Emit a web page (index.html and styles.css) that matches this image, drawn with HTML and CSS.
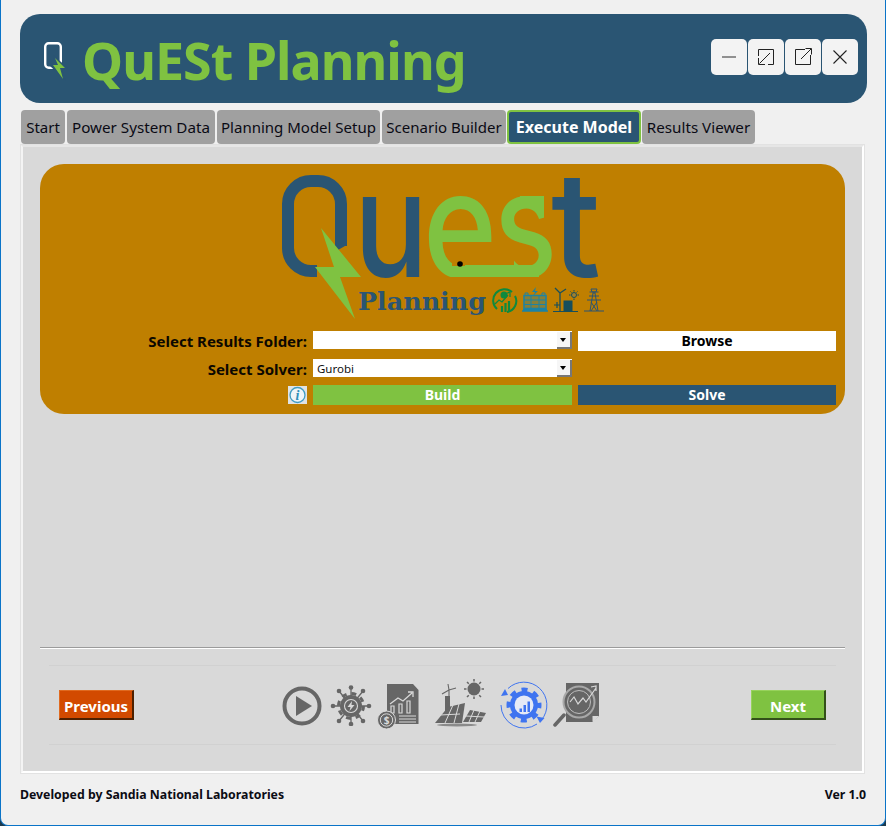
FILE: index.html
```html
<!DOCTYPE html>
<html lang="en">
<head>
<meta charset="utf-8">
<title>QuESt Planning</title>
<link rel="stylesheet" href="styles.css">
</head>
<body>
<div class="window">
  <header class="banner">
    <svg class="banner-logo" viewBox="42 40 26 41" aria-hidden="true">
      <rect x="45.200" y="43.200" width="15.600" height="24.600" rx="3.500" fill="none" stroke="#fff" stroke-width="2.400"/>
      <polygon points="53,55 68,68 62,70 66,81 50,66 54,62" fill="#2a5573"/>
      <polygon points="55,58 65,68 60,68 63,79 53,65 58,65" fill="#7fc241"/>
    </svg>
    <h1 class="banner-title">QuESt Planning</h1>
    <div class="win-buttons">
      <button class="win-btn" aria-label="Minimize"><svg viewBox="0 0 36 36"><path d="M11 18h14" stroke="#777" stroke-width="1.600"/></svg></button>
      <button class="win-btn" aria-label="Shrink"><svg viewBox="0 0 36 36" fill="none" stroke="#222" stroke-width="1"><path d="M10.500 17V10.500H25.500V25.500H20"/><path d="M22 14L11.500 24.500M10.500 19V25.500H17"/></svg></button>
      <button class="win-btn" aria-label="Expand"><svg viewBox="0 0 36 36" fill="none" stroke="#222" stroke-width="1"><path d="M20 10.500H10.500V25.500H25.500V16"/><path d="M16 20L26 10M20.500 9.500H26.500V15.500"/></svg></button>
      <button class="win-btn" aria-label="Close"><svg viewBox="0 0 36 36" fill="none" stroke="#222" stroke-width="1.100"><path d="M11.500 11.500L24.500 24.500M24.500 11.500L11.500 24.500"/></svg></button>
    </div>
  </header>

  <nav class="tabs">
    <div class="tab tab-start">Start</div>
    <div class="tab tab-power">Power System Data</div>
    <div class="tab tab-model">Planning Model Setup</div>
    <div class="tab tab-scenario">Scenario Builder</div>
    <div class="tab tab-active">Execute Model</div>
    <div class="tab tab-results">Results Viewer</div>
  </nav>

  <main class="panel">
    <section class="card">
      <svg class="card-logo" viewBox="270 168 345 157" role="img" aria-label="Quest Planning logo">
        <rect x="288" y="181" width="53" height="90" rx="23" fill="none" stroke="#2a5573" stroke-width="12"/>
        <polygon points="317,262 345,246 356,246 356,284 317,284" fill="#bf7f00"/>
        <text class="lg"><tspan class="lg-blue" x="354" y="277" textLength="74" lengthAdjust="spacingAndGlyphs">u</tspan><tspan class="lg-green" x="423" y="277" textLength="74" lengthAdjust="spacingAndGlyphs">e</tspan><tspan class="lg-green" x="494" y="277" textLength="63" lengthAdjust="spacingAndGlyphs">s</tspan><tspan class="lg-blue" x="551" y="277" textLength="50" lengthAdjust="spacingAndGlyphs">t</tspan></text>
        <rect x="452" y="246" width="62" height="20" fill="#bf7f00"/>
        <rect x="544" y="190" width="8" height="36" fill="#bf7f00"/>
        <rect x="425" y="277" width="130" height="6" fill="#bf7f00"/>
        <rect x="465" y="265" width="74" height="12" fill="#7fc241"/>
        <rect x="520" y="196" width="24" height="12" fill="#7fc241"/>
        <polygon points="321,228 361,277 340,277 355,319 315,267 334,267" fill="#7fc241"/>
        <circle cx="460" cy="264" r="2.800" fill="#000"/>
        <text class="lg-sub" x="358" y="310" textLength="128" lengthAdjust="spacingAndGlyphs">Planning</text>
        <g fill="none" stroke="#0e8a3e" stroke-width="2">
          <path d="M497 309a11 11 0 1 1 15-17"/>
          <path d="M515 296a11 11 0 0 1-8 16"/>
          <circle cx="504" cy="295" r="3.500" fill="#0e8a3e" stroke="none"/>
          <path d="M495 304l4-4 3 2 6-7M505 294l5-2v5" stroke-width="1.300"/>
          <path d="M502 312v-6M505.500 312v-9M509 312v-11" stroke-width="2.200"/>
        </g>
        <g fill="none" stroke="#1b83a5">
          <path d="M522 311h26M523 309.500h24" stroke-width="1.600"/>
          <rect x="524" y="295.500" width="22" height="13" fill="#1b83a5" fill-opacity=".35" stroke-width="1.500"/>
          <path d="M531 295v14M539 295v14M524 300h22M524 304.500h22" stroke-width="1"/>
          <path d="M525 295v-2h3v2M542 295v-2h3v2" stroke-width="1"/>
          <polygon points="536,287 532,292 535,292 533,296 538,291 535,291" fill="#1b83a5" stroke="none"/>
        </g>
        <g fill="none" stroke="#174f5c" stroke-width="1">
          <path d="M553 311.500h25"/>
          <path d="M560 311v-18M560 293l-5-5M560 293l6-4M560 293v7" stroke-width="1.300"/>
          <path d="M554 305h6M557 302v6" stroke-width="1.200"/>
          <rect x="564" y="301" width="8" height="10" fill="#174f5c"/>
          <circle cx="574" cy="295" r="2.500" fill="#a08030"/>
          <path d="M574 290v1.500M574 298.500v1.500M569 295h1.500M577.500 295h1.500M570.500 291.500l1 1M577.500 291.500l-1 1"/>
        </g>
        <g fill="none" stroke="#2a5573" stroke-width="1">
          <path d="M584 311h20M590 311l3-18h2l3 18M589 296h10M587 300h14M591 302l6 9M597 302l-6 9M589.500 292h9"/>
          <path d="M591 289h6l-1 3h-4z"/>
        </g>
      </svg>

      <div class="form">
        <label class="form-label">Select Results Folder:</label>
        <div class="combo"><span class="combo-value"></span><span class="combo-arrow"></span></div>
        <button class="btn-browse">Browse</button>

        <label class="form-label">Select Solver:</label>
        <div class="combo"><span class="combo-value">Gurobi</span><span class="combo-arrow"></span></div>
        <span></span>

        <div class="info-cell">
          <svg class="info" viewBox="0 0 19 18" aria-label="Information">
            <rect width="19" height="18" fill="#dfe3e5"/>
            <circle cx="9.500" cy="9" r="7.500" fill="#eef5f8" stroke="#3f9cc2" stroke-width="1.300"/>
            <text class="info-i" x="9.500" y="13.500">i</text>
          </svg>
        </div>
        <button class="btn-build">Build</button>
        <button class="btn-solve">Solve</button>
      </div>
    </section>

    <div class="spacer"></div>
    <div class="divider"></div>

    <div class="nav-area">
      <button class="step-btn step-prev">Previous</button>
      <div class="steps">
        <svg class="icon-play" viewBox="283 687 40 40" aria-label="Start">
          <circle cx="303" cy="707" r="17.500" fill="none" stroke="#666" stroke-width="4"/>
          <polygon points="297,697 297,717 313,707" fill="#666"/>
        </svg>
        <svg class="icon-gear" viewBox="331 684 42 42" aria-label="Power system data">
          <g stroke="#666" stroke-width="1.300">
            <path d="M352 688v36M334 706h36M340 691l24 30M364 691l-24 30"/>
          </g>
          <g fill="#666">
            <circle cx="352" cy="687.500" r="2.300"/><circle cx="352" cy="724" r="2.300"/>
            <circle cx="334" cy="706" r="2.300"/><circle cx="370" cy="706" r="2.300"/>
            <circle cx="340" cy="691" r="2.300"/><circle cx="364" cy="691" r="2.300"/>
            <circle cx="340" cy="721" r="2.300"/><circle cx="364" cy="721" r="2.300"/>
          </g>
          <circle cx="352" cy="706" r="12.500" fill="none" stroke="#666" stroke-width="3" stroke-dasharray="4.900 4.920"/>
          <circle cx="352" cy="706" r="11" fill="#666"/>
          <circle cx="352" cy="706" r="6.500" fill="none" stroke="#d9d9d9" stroke-width="1.100"/>
          <polygon points="353,701 348.500,707 351.500,707 350.500,711 355.500,705 352.500,705" fill="#d9d9d9"/>
        </svg>
        <svg class="icon-report" viewBox="377 683 44 47" aria-label="Planning model setup">
          <polygon points="388,684 414,684 419.500,690 419.500,724 388,724" fill="#666"/>
          <path d="M391 704l8-6 5 3 9-8M409 692l5 0v5" fill="none" stroke="#d9d9d9" stroke-width="1.300"/>
          <path d="M392 713v-7h3v7zM400 713v-9h3v9zM408 713v-12h3v12z" fill="none" stroke="#d9d9d9" stroke-width="1.200"/>
          <path d="M400 716h17M400 719h17M400 722h17" stroke="#d9d9d9" stroke-width="1"/>
          <circle cx="387.500" cy="720" r="9" fill="#666" stroke="#d9d9d9" stroke-width="1"/>
          <circle cx="387.500" cy="720" r="6.200" fill="none" stroke="#d9d9d9" stroke-width="1"/>
          <text class="dollar" x="387.500" y="723.500">$</text>
        </svg>
        <svg class="icon-solar" viewBox="435 677 56 51" aria-label="Scenario builder">
          <circle cx="475" cy="688" r="6.500" fill="#666"/>
          <path d="M475 678v2.500M475 695.500v2.500M465 688h2.500M482.500 688h2.500M468 681l1.800 1.800M480.200 694.200l1.800 1.800M482 681l-1.800 1.800M469.800 694.200l-1.800 1.800" stroke="#666" stroke-width="1.500"/>
          <rect x="446" y="695" width="5" height="16" fill="#666"/>
          <path d="M450 689l-7 4M450 689l-1-6M450 689l7-2M450 689v7" fill="none" stroke="#666" stroke-width="1.100"/>
          <polygon points="436,722 463,722 466,702 449,706" fill="#666"/>
          <path d="M441 714l20-1M446 722l8-18M455 722l5-19" stroke="#d9d9d9" stroke-width="1"/>
          <polygon points="464,721 482,721 487,712 471,709" fill="#666"/>
          <path d="M467 715l18 1M470 721l5-12M476 721l5-11" stroke="#d9d9d9" stroke-width="1"/>
          <ellipse cx="458" cy="724" rx="20" ry="1.500" fill="#8a8a8a"/>
        </svg>
        <svg class="icon-exec" viewBox="501 681 48 48" aria-label="Execute model">
          <path d="M509 688.500a23 23 0 0 1 33.600 31.300M538 724a23 23 0 0 1-36-19" fill="none" stroke="#3f74f0" stroke-width="1"/>
          <polygon points="506,689 502,696 509,695" fill="#3f74f0"/>
          <polygon points="541,723 537.500,716.500 545.500,718" fill="#3f74f0"/>
          <circle cx="525" cy="705" r="15" fill="none" stroke="#3f74f0" stroke-width="5" stroke-dasharray="5.900 5.880" stroke-dashoffset="2.900"/>
          <circle cx="525" cy="705" r="14" fill="#3f74f0"/>
          <circle cx="525" cy="705" r="9.500" fill="#e6eaf6"/>
          <path d="M520.500 712v-3.500h2.500v3.500zM524.500 712v-7h2.500v7zM528.500 712v-10.500h2.500v10.500z" fill="#3f74f0"/>
        </svg>
        <svg class="icon-results" viewBox="554 682 48 47" aria-label="Results viewer">
          <polygon points="567,683 600,683 600,716 593,722 567,722" fill="#666"/>
          <polygon points="594,722 594,716 600,716" fill="#d9d9d9"/>
          <path d="M594 716v5" stroke="#d9d9d9"/>
          <path d="M556 725l9-10" stroke="#666" stroke-width="3.500" stroke-linecap="round"/>
          <circle cx="580" cy="702" r="15.500" fill="#666" stroke="#a8a8a8" stroke-width="2"/>
          <circle cx="580" cy="702" r="11.500" fill="none" stroke="#bdbdbd" stroke-width="1"/>
          <path d="M571 702l4-5 4 7 5-6 3 4 10-14M592 687l5-1v5" fill="none" stroke="#d9d9d9" stroke-width="1.200"/>
        </svg>
      </div>
      <button class="step-btn step-next">Next</button>
    </div>
  </main>

  <footer class="footer">
    <span>Developed by Sandia National Laboratories</span>
    <span>Ver 1.0</span>
  </footer>
</div>
</body>
</html>
```
FILE: styles.css
```css
* { box-sizing: border-box; }
html, body { margin: 0; padding: 0; background: #1d3a4e; }
body { width: 886px; height: 826px; overflow: hidden; font-family: "Noto Sans", "Open Sans", sans-serif; }
button { font-family: inherit; border: 0; padding: 0; margin: 0; cursor: default; }

.window {
  width: 886px; height: 826px;
  background: #f0f0f0;
  border: 1px solid #0a74c8; border-top: 0; border-left-width: 1.500px;
  border-radius: 0 0 8px 8px;
  padding: 14px 18px 0 19px;
  display: flex; flex-direction: column;
}

.banner {
  height: 89px; background: #2a5573; border-radius: 20px; flex: none;
  display: flex; align-items: center; padding: 0 9px 0 22px;
}
.banner-logo { width: 26px; height: 41px; flex: none; margin-top: 4px; }
.banner-title {
  margin: 3px 0 0 14px; flex: 1;
  color: #7fc241; font-size: 52px; font-weight: 700; letter-spacing: -1px; line-height: 1; white-space: nowrap;
}
.win-buttons { display: flex; gap: 1px; margin-bottom: 4px; }
.win-btn { width: 36px; height: 36px; background: #f3f3f3; border-radius: 5px; display: block; }
.win-btn svg { width: 36px; height: 36px; display: block; }

.tabs { display: flex; gap: 2px; margin: 7px 0 1px 1px; height: 34px; flex: none; }
.tab {
  background: #a0a0a0; border-radius: 4px; color: #0a0a14; padding-bottom: 1px;
  font-size: 15px; display: flex; align-items: center; justify-content: center; white-space: nowrap;
}
.tab-start { width: 44px; }
.tab-power { width: 148px; font-size: 15.200px; }
.tab-model { width: 163px; }
.tab-scenario { width: 124px; }
.tab-results { width: 113px; margin-left: -1px; font-size: 15.200px; }
.tab-active {
  width: 134px; margin-left: -1px; padding-bottom: 0;
  background: #2a5573; color: #fff; font-weight: 700;
  border: 2.500px solid #7fc241; border-radius: 4px; font-size: 16px;
}

.panel {
  width: 843px; margin-left: 1px; height: 628px; flex: none;
  background: #d9d9d9; border: 2px solid #fff; border-top-color: #e6e6e6; border-left-color: #f4f4f4;
  outline: 1px solid #e2e2e2;
  padding: 17px 17px 0 17px;
  display: flex; flex-direction: column;
}

.card {
  height: 250px; background: #bf7f00; border-radius: 24px; flex: none;
  display: flex; flex-direction: column; align-items: flex-start;
  padding-top: 4px;
}
.card-logo { width: 345px; height: 157px; margin-left: 230px; flex: none; display: block; overflow: visible; }
.lg { font-family: "Inter", "Lato", sans-serif; font-size: 146px; font-weight: 500; }
.lg-blue { fill: #2a5573; }
.lg-green { fill: #7fc241; }
.lg-sub { font-family: "DejaVu Serif", serif; font-weight: 700; font-size: 24px; fill: #2a5573; }

.form {
  display: grid; grid-template-columns: 267px 259px 258px; column-gap: 6px;
  grid-template-rows: 19px 17px 20px; row-gap: 9px;
  margin-top: 6px; width: 100%;
}
.form-label {
  font-size: 15px; font-weight: 700; color: #0c0800; text-align: right; line-height: 21px; white-space: nowrap;
}
.combo { background: #fff; height: 18px; display: flex; justify-content: space-between; }
.combo-value { font-size: 11.500px; line-height: 20px; padding-left: 4px; color: #111; }
.combo-arrow {
  width: 15px; height: 17px; margin-top: 1px; background: #f6f6f6;
  border-right: 2px solid #777; border-bottom: 2px solid #777;
  position: relative;
}
.combo-arrow::after {
  content: ""; position: absolute; left: 3px; top: 6px;
  border: 3.500px solid transparent; border-top: 4px solid #000; border-bottom: 0;
}
.btn-browse, .btn-build, .btn-solve { font-size: 14px; font-weight: 700; line-height: 1; }
.btn-browse { background: #fff; color: #000; height: 20px; }
.btn-build { background: #7fc241; color: #fff; }
.btn-solve { background: #2a5573; color: #fff; }
.info-cell { display: flex; justify-content: flex-end; align-items: center; }
.info { width: 19px; height: 18px; display: block; }
.info-i { font-family: "Liberation Serif", serif; font-style: italic; font-weight: 700; font-size: 14px; fill: #2f8fb8; text-anchor: middle; }

.spacer { flex: 1; }
.divider { height: 2px; flex: none; background: #fff; border-top: 1px solid #9b9b9b; }

.nav-area {
  height: 80px; margin: 16px 9px 26px;
  border-top: 1px solid #d1d1d1; border-bottom: 1px solid #d1d1d1;
  display: flex; align-items: center; justify-content: space-between;
  padding: 0 10px 0 10px; flex: none; position: relative;
}
.step-btn {
  width: 75px; height: 30px; color: #fff; font-size: 15px; font-weight: 700; line-height: 1;
  border-style: solid; border-width: 1px 2px 2px 1px; padding-top: 3px;
}
.step-prev { background: #d24a00; border-color: #e06a20 #4e2000 #4e2000 #e06a20; }
.step-next { background: #7fc241; border-color: #97d25c #33501a #33501a #97d25c; }
.steps { display: flex; align-items: center; position: relative; left: -1px; }
.steps svg { display: block; flex: none; }
.icon-play { width: 40px; height: 40px; margin-top: 2px; }
.icon-gear { width: 42px; height: 42px; margin-left: 8px; margin-top: -1px; }
.icon-report { width: 44px; height: 47px; margin-left: 4px; margin-top: 2px; }
.icon-solar { width: 56px; height: 51px; margin-left: 14px; margin-top: -4px; }
.icon-exec { width: 48px; height: 48px; margin-left: 10px; margin-top: -1px; }
.icon-results { width: 48px; height: 47px; margin-left: 5px; margin-top: 0; }
.dollar { font-family: "Noto Sans", sans-serif; font-size: 10px; font-weight: 700; fill: #d9d9d9; text-anchor: middle; }

.footer {
  flex: 1; display: flex; justify-content: space-between; align-items: flex-start;
  padding-top: 13px; font-size: 12.300px; font-weight: 700; color: #0c0c14; padding-right: 1px;
}
```
